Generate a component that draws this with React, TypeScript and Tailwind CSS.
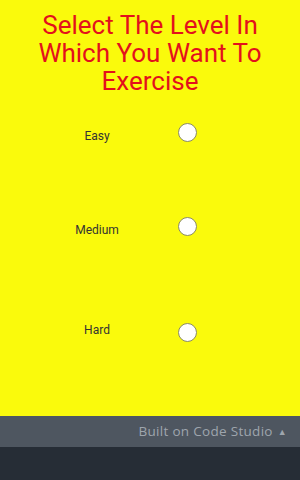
const LEVELS: { id: string; label: string; rowCls: string; labelCls: string; radioCls: string }[] = [
  { id: 'easy', label: 'Easy', rowCls: 'mt-[28px]', labelCls: 'mt-[5px]', radioCls: '' },
  { id: 'medium', label: 'Medium', rowCls: 'mt-[73px]', labelCls: 'mt-[5px]', radioCls: '' },
  { id: 'hard', label: 'Hard', rowCls: 'mt-[84px]', labelCls: 'mt-0', radioCls: 'mt-[1px]' }
]

export default function App() {
  return (
    <div className="flex h-[480px] w-[300px] flex-col overflow-hidden bg-[#262d36]" style={{ fontFamily: 'Roboto, "Liberation Sans", sans-serif' }}>
      <div className="flex h-[416px] flex-col bg-[#fafa0c]">
        <h1 className="px-4 pt-[11px] text-center text-[26px] font-normal leading-[28px] text-[#e3101c]">
          Select The Level In Which You Want To Exercise
        </h1>
        {LEVELS.map((l) => (
          <div key={l.id} className={`flex items-start ${l.rowCls}`}>
            <div className={`ml-[46px] w-[102px] text-center text-[12px] leading-[16px] text-[#333333] ${l.labelCls}`}>{l.label}</div>
            <div className={`ml-[30px] h-[19px] w-[19px] rounded-full border border-[#8a8a6a] bg-white ${l.radioCls}`} />
          </div>
        ))}
      </div>
      <div className="flex h-[31px] items-center justify-end bg-[#4e5660] pr-[13px] text-[13.5px] tracking-[0.3px] text-[#9ea5ad]" style={{ fontFamily: '"Open Sans", Lato, sans-serif' }}>
        <span>Built on Code Studio</span>
        <span className="ml-[5px] text-[9px]">▲</span>
      </div>
    </div>
  )
}
